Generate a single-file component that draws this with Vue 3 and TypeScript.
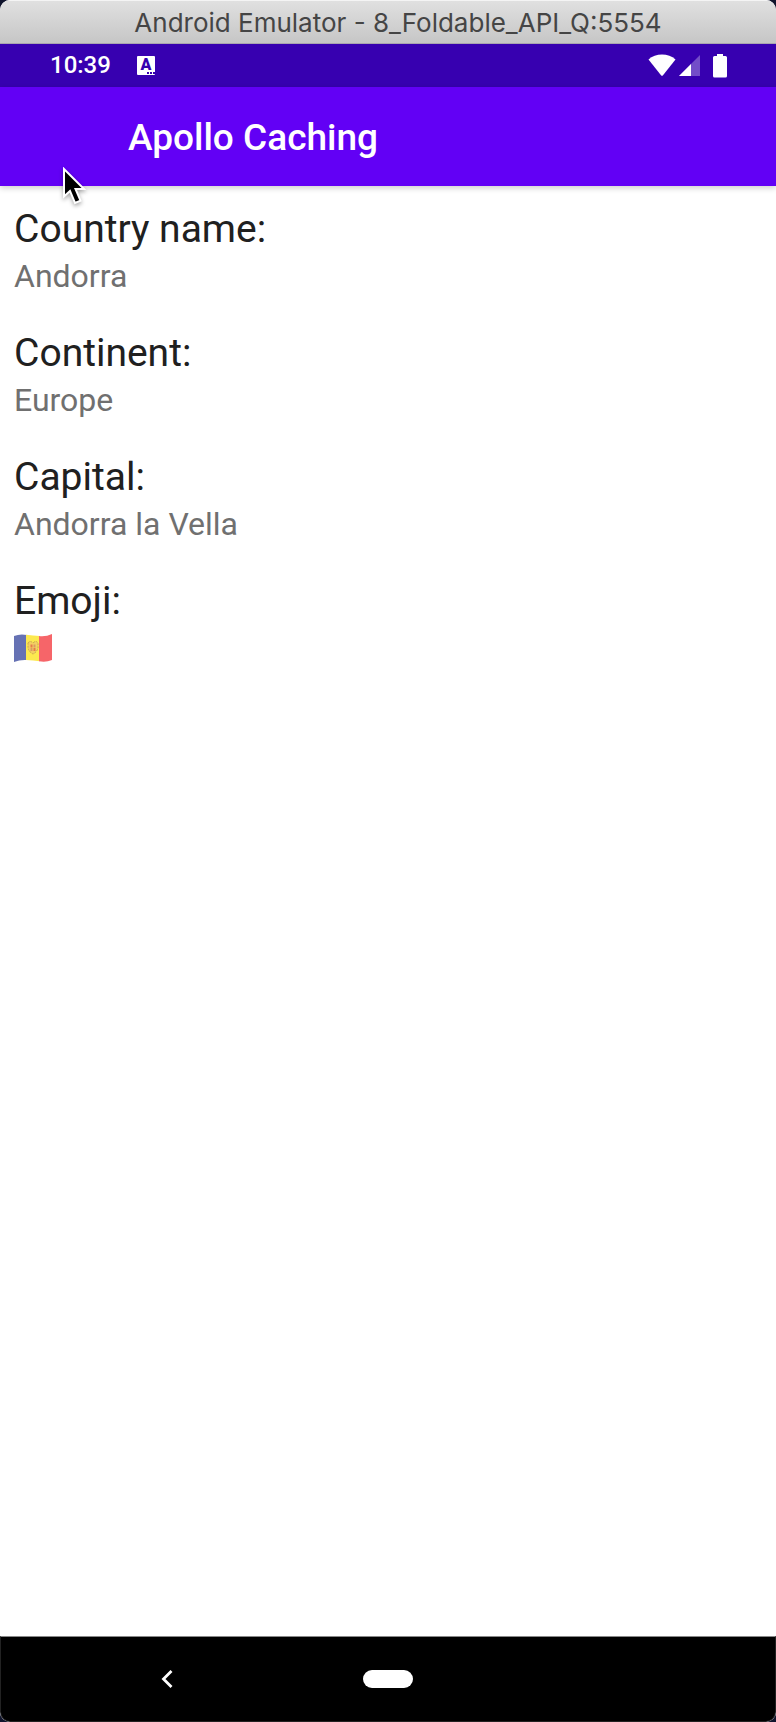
<script setup lang="ts">
interface Field {
  label: string
  value: string
}

const fields: Field[] = [
  { label: 'Country name:', value: 'Andorra' },
  { label: 'Continent:', value: 'Europe' },
  { label: 'Capital:', value: 'Andorra la Vella' },
]
</script>

<template>
  <div class="window">
    <header class="titlebar">Android Emulator - 8_Foldable_API_Q:5554</header>

    <div class="statusbar">
      <time class="clock">10:39</time>
      <span class="keyboard">
        <span class="keyboard-letter">A</span>
        <svg class="keyboard-dots" viewBox="0 0 8 2" aria-hidden="true">
          <path d="M0 0h2v2H0zM3 0h2v2H3zM6 0h2v2H6z" />
        </svg>
      </span>
      <span class="spacer"></span>
      <svg class="wifi" viewBox="0 0 28 24" aria-hidden="true">
        <path d="M.5 5.5C4 2.200 9 .5 14 .5s10 1.700 13.500 5L15 21.200q-1 1-2 0z" />
      </svg>
      <svg class="signal" viewBox="0 0 22 24" aria-hidden="true">
        <path d="M21 1v21H0z" opacity=".3" />
        <path d="M12 10v12H0z" />
      </svg>
      <svg class="battery" viewBox="0 0 14 24" aria-hidden="true">
        <path d="M4 0h6v2h2.500Q14 2 14 3.500v18.500q0 1.500-1.500 1.500h-11Q0 23.500 0 22V3.500Q0 2 1.500 2H4z" />
      </svg>
    </div>

    <div class="appbar">
      <h1 class="app-title">Apollo Caching</h1>
      <svg class="cursor" viewBox="0 0 26 40" aria-hidden="true">
        <path
          d="M2 2v27.500l6-5.600 5 12.100 5.500-2.300-5-11.700H22z"
          fill="#000"
          stroke="#fff"
          stroke-width="2"
        />
      </svg>
    </div>

    <main class="content">
      <dl class="fields">
        <div v-for="field in fields" :key="field.label" class="field">
          <dt>{{ field.label }}</dt>
          <dd>{{ field.value }}</dd>
        </div>
        <div class="field">
          <dt>Emoji:</dt>
          <dd class="emoji">
            <svg class="flag" viewBox="0 0 38 28" role="img" aria-label="Flag of Andorra">
              <path d="M0 2Q6-.5 13 1v25Q6 25.500 0 28z" fill="#6672b4" />
              <path d="M12 .8Q19 1.500 26 2v25.300Q19 26.500 12 26z" fill="#fce94f" />
              <path d="M25 2q7 .8 13-2v26q-6 2.500-13 1.200z" fill="#f66569" />
              <path
                d="M14 9q2-3 5 0 3-3 5 0v5q-1 4-5 6-4-2-5-6z"
                fill="#f3cf62"
                stroke="#c9a64e"
                stroke-dasharray="2 1"
              />
              <path d="M16.500 10.500h2v3h-2zM19.500 14h2v3h-2z" fill="#e57a4c" />
              <path d="M19.500 10.500h2v3h-2zM16.500 14h2v3h-2z" fill="#d99b62" />
            </svg>
          </dd>
        </div>
      </dl>
    </main>

    <nav class="navbar">
      <button class="nav-button back" type="button" aria-label="Back">
        <svg viewBox="0 0 12 20" aria-hidden="true">
          <path d="M10.500 2 2.500 10l8 8" fill="none" stroke="#fff" stroke-width="2.800" />
        </svg>
      </button>
      <button class="nav-button home" type="button" aria-label="Home">
        <span class="pill"></span>
      </button>
    </nav>
  </div>
</template>

<style>
body {
  margin: 0;
  background: #10142c;
}
</style>

<style scoped>
.window {
  display: flex;
  flex-direction: column;
  min-height: 100vh;
  overflow: hidden;
  border-radius: 10px;
  background: #fff;
  font-family: Roboto, "Liberation Sans", sans-serif;
}

.titlebar {
  box-sizing: border-box;
  height: 44px;
  padding-left: 20px;
  border-top: 1px solid #f4f4f4;
  border-bottom: 1px solid #aaa5b0;
  background: linear-gradient(#e0e0e0, #c6c6c6);
  color: #454545;
  font: 26px/44px Inter, "Liberation Sans", sans-serif;
  text-align: center;
  white-space: nowrap;
}

.statusbar {
  display: flex;
  align-items: center;
  height: 43px;
  padding: 0 49px 0 50px;
  background: #3700b0;
  color: #fff;
}

.clock {
  font: 500 24px/43px Roboto, sans-serif;
}

.keyboard {
  display: flex;
  flex-direction: column;
  align-items: center;
  width: 18px;
  height: 19px;
  margin-left: 26px;
  border-radius: 1px;
  background: #fff;
  color: #3700b0;
}

.keyboard-letter {
  height: 16px;
  font: 900 16px/18px Roboto, sans-serif;
}

.keyboard-dots {
  align-self: flex-end;
  width: 8px;
  height: 2px;
  fill: #3700b0;
}

.spacer {
  flex: 1;
}

.wifi,
.signal,
.battery {
  height: 24px;
  fill: #fff;
}

.wifi {
  width: 28px;
}

.signal {
  width: 22px;
  margin-left: 3px;
}

.battery {
  width: 14px;
  margin-left: 12px;
}

.appbar {
  position: relative;
  display: flex;
  align-items: center;
  box-sizing: border-box;
  height: 99px;
  padding: 3px 0 0 128px;
  background: #6200f5;
  box-shadow: 0 2px 6px rgba(0, 0, 0, 0.2);
}

.app-title {
  margin: 0;
  color: #fff;
  font-size: 37px;
  font-weight: 500;
  line-height: 48px;
}

.cursor {
  position: absolute;
  left: 62px;
  bottom: -21px;
  width: 26px;
  height: 40px;
  filter: drop-shadow(0 2px 2px rgba(0, 0, 0, 0.35));
}

.content {
  flex: 1;
  padding: 18px 14px;
}

.fields {
  display: flex;
  flex-direction: column;
  gap: 30px;
  margin: 0;
}

dt {
  color: #202020;
  font-size: 39px;
  line-height: 50px;
}

dd {
  height: 44px;
  margin: 0;
  color: #707070;
  font-size: 32px;
  line-height: 44px;
}

.emoji {
  display: flex;
  align-items: center;
}

.flag {
  width: 38px;
  height: 28px;
}

.navbar {
  display: grid;
  grid-template-columns: repeat(7, 1fr);
  align-items: center;
  justify-items: center;
  box-sizing: border-box;
  height: 86px;
  border: 1px solid #222;
  border-top-color: #888;
  border-radius: 0 0 10px 10px;
  background: #000;
}

.nav-button {
  display: flex;
  align-items: center;
  justify-content: center;
  height: 48px;
  padding: 0;
  border: 0;
  background: none;
}

.back {
  grid-column: 2;
  width: 48px;
}

.home {
  grid-column: 4;
  width: 60px;
}

.back svg {
  width: 12px;
  height: 20px;
}

.pill {
  width: 50px;
  height: 18px;
  border-radius: 9px;
  background: #fff;
}
</style>
